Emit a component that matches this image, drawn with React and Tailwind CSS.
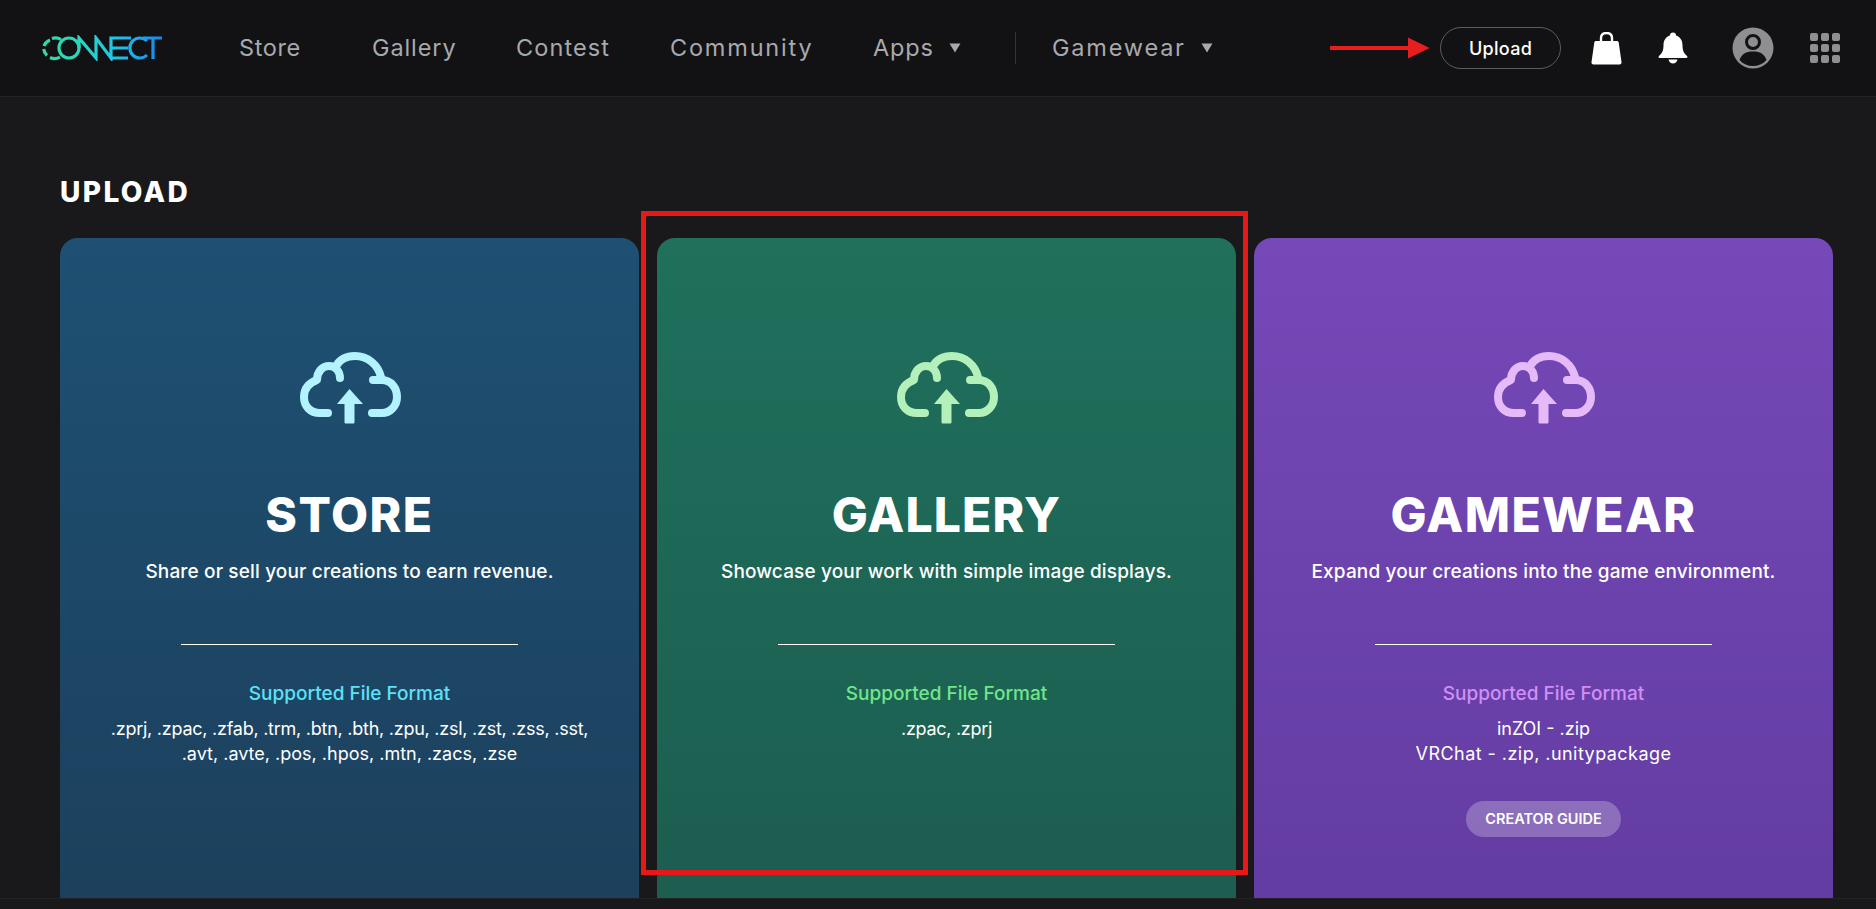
const font = { fontFamily: 'Inter, "Noto Sans", sans-serif' };

function Logo() {
  return (
    <svg width="122" height="26" viewBox="41 35 122 26" fill="none" className="shrink-0">
      <defs>
        <linearGradient id="lg" gradientUnits="userSpaceOnUse" x1="42" y1="0" x2="162" y2="0">
          <stop offset="0" stopColor="#2fdca0" />
          <stop offset="0.35" stopColor="#2bd3c4" />
          <stop offset="0.6" stopColor="#22c6e6" />
          <stop offset="1" stopColor="#1688f0" />
        </linearGradient>
      </defs>
      <g stroke="url(#lg)" strokeWidth="3.2" strokeLinecap="butt">
        <path d="M61 39.5 A10.5 10.5 0 0 0 52 38.5" />
        <path d="M50 40 A10.5 10.5 0 0 0 44 46" />
        <path d="M43.7 49 A10.5 10.5 0 0 0 47 55.5" />
        <path d="M50 57.5 A10.5 10.5 0 0 0 60 57" />
        <circle cx="69" cy="48" r="10" />
        <path d="M79 48 V38 L96 58 V38 L111 58 V38 H131 M111 48 H128 M111 58 H128" />
        <path d="M147 41 A10 10 0 1 0 147 55" />
        <path d="M143 38 H162 M153 38 V59" />
      </g>
    </svg>
  );
}

function NavLink({ children, caret, className = '' }) {
  return (
    <span className={`flex items-center text-[23.5px] leading-none text-[#a9a9ad] ${className}`}>
      {children}
      {caret && (
        <svg width="12" height="10" viewBox="0 0 12 10" className="ml-[15px]">
          <path d="M0.5 0.5 H11.5 L6 9.5 Z" fill="#a9a9ad" />
        </svg>
      )}
    </span>
  );
}

function CloudIcon({ color }) {
  return (
    <svg width="104" height="80" viewBox="38 20 104 80" fill="none">
      <g stroke={color} strokeWidth="8" strokeLinecap="round" strokeLinejoin="round">
        <path d="M68 83 H60 C50 83 44 76 44 67 C44 59 49 53 57 50 C57 41 63 36 69 36 C76 36 80 42 80 48" />
        <path d="M76 36 C80 29 87 26 95 26 C108 26 118 35 121 47" />
        <path d="M113 50 H122 C131 50 137 58 137 67 C137 76 130 83 122 83 H112" />
      </g>
      <path d="M89.5 59 L103 74 H94.5 V92 C94.5 93 94 93.5 93 93.5 H86 C85 93.5 84.5 93 84.5 92 V74 H77 Z" fill={color} />
    </svg>
  );
}

function Card({ title, subtitle, bg, iconColor, accent, lines, tracking, button }) {
  return (
    <div className={`flex h-[680px] flex-col items-center rounded-[18px] pt-[112px] text-center text-white ${bg}`}>
      <CloudIcon color={iconColor} />
      <h2 className={`mt-[56px] text-[48px] font-extrabold leading-[58px] ${tracking}`}>{title}</h2>
      <p className="mt-[14px] text-[19px] font-medium leading-[28px] tracking-[0.15px]">{subtitle}</p>
      <div className="mt-[58px] h-px w-[337px] bg-white" />
      <p className={`mt-[36px] text-[19px] font-medium leading-[26px] ${accent}`}>Supported File Format</p>
      <div className="mt-[9px] text-[18px] leading-[25px]">
        {lines.map(([text, cls]) => (
          <div key={text} className={cls}>{text}</div>
        ))}
      </div>
      {button && (
        <span className="mt-[35px] flex h-[36px] w-[155px] items-center justify-center rounded-full bg-white/25 text-[14.5px] font-semibold">
          CREATOR GUIDE
        </span>
      )}
    </div>
  );
}

export default function App() {
  return (
    <div style={font} className="relative h-[909px] w-full overflow-hidden bg-[#19191b]">
      <header className="flex h-[97px] items-center border-b border-[#232325] bg-[#121214] pl-[41px] pr-[36px]">
        <Logo />
        <nav className="ml-[76px] flex items-center">
          <NavLink className="w-[133px] tracking-[0.6px]">Store</NavLink>
          <NavLink className="w-[144px] tracking-[0.9px]">Gallery</NavLink>
          <NavLink className="w-[154px] tracking-[1.1px]">Contest</NavLink>
          <NavLink className="w-[203px] tracking-[1.8px]">Community</NavLink>
          <NavLink caret className="w-[142px] tracking-[0.8px]">Apps</NavLink>
          <span className="mr-[36px] h-[32px] w-px bg-[#333336]" />
          <NavLink caret className="tracking-[1.8px]">Gamewear</NavLink>
        </nav>
        <div className="ml-auto flex items-center">
          <span className="mr-[10px] flex items-center">
            <svg width="100" height="22" viewBox="0 0 100 22">
              <path d="M0 9 H78 V0.5 L99.5 11 L78 21.5 V13 H0 Z" fill="#e61e1e" />
            </svg>
          </span>
          <span className="flex h-[42px] w-[121px] items-center justify-center rounded-full border border-[#5c5c5f] text-[18px] font-medium tracking-[0.3px] text-white">
            Upload
          </span>
          <svg className="ml-[30px]" width="31" height="33" viewBox="0 0 31 33" fill="white">
            <path d="M10 9 V6 C10 2.5 12 1 15.5 1 C19 1 21 2.5 21 6 V9" fill="none" stroke="white" strokeWidth="2.4" />
            <path d="M5 9 H26 C27 9 27.6 9.6 27.7 10.5 L30.5 30 C30.7 31.5 30 32.5 28.5 32.5 H2.5 C1 32.5 0.3 31.5 0.5 30 L3.3 10.5 C3.4 9.6 4 9 5 9 Z" />
          </svg>
          <svg className="ml-[36px]" width="30" height="32" viewBox="0 0 30 32" fill="white">
            <circle cx="15" cy="3.5" r="3" />
            <path d="M15 3 C21 3 24.5 7.5 24.5 13 C24.5 18 25.5 21 29 24 C30 25 29.5 26 28 26 H2 C0.5 26 0 25 1 24 C4.5 21 5.5 18 5.5 13 C5.5 7.5 9 3 15 3 Z" />
            <path d="M10.5 27.5 H19.5 C19 30 17 31.5 15 31.5 C13 31.5 11 30 10.5 27.5 Z" />
          </svg>
          <svg className="ml-[44px]" width="42" height="42" viewBox="0 0 42 42">
            <circle cx="21" cy="21" r="20.5" fill="#8e8e93" />
            <circle cx="21" cy="15" r="6.5" fill="#8e8e93" stroke="#121214" strokeWidth="3" />
            <path d="M7.5 33 C9.5 27 14 24.5 21 24.5 C28 24.5 32.5 27 34.5 33 C31 37 26 39 21 39 C16 39 11 37 7.5 33 Z" fill="#121214" />
          </svg>
          <div className="ml-[36px] grid grid-cols-3 gap-[3px]">
            {Array.from({ length: 9 }).map((_, i) => (
              <span key={i} className="h-[8px] w-[8px] rounded-[2px] bg-[#8e8e93]" />
            ))}
          </div>
        </div>
      </header>

      <main className="h-[801px] overflow-hidden pl-[60px]">
        <h1 className="mt-[78px] text-[28px] font-extrabold leading-[34px] tracking-[2.4px] text-white">UPLOAD</h1>
        <div className="mt-[29px] grid w-[1773px] grid-cols-3 gap-[18px]">
          <Card
            title="STORE"
            subtitle="Share or sell your creations to earn revenue."
            bg="bg-gradient-to-b from-[#1e5073] to-[#1c405c]"
            iconColor="#b2f3ff"
            accent="text-[#5ce1f6]"
            tracking="tracking-[1.5px]"
            lines={[
              ['.zprj, .zpac, .zfab, .trm, .btn, .bth, .zpu, .zsl, .zst, .zss, .sst,', 'tracking-[-0.25px]'],
              ['.avt, .avte, .pos, .hpos, .mtn, .zacs, .zse', ''],
            ]}
          />
          <Card
            title="GALLERY"
            subtitle="Showcase your work with simple image displays."
            bg="bg-gradient-to-b from-[#1f705c] to-[#1c5d50]"
            iconColor="#b4f0ba"
            accent="text-[#71e58a]"
            tracking="tracking-[1.2px]"
            lines={[['.zpac, .zprj', 'tracking-[-0.3px]']]}
          />
          <Card
            title="GAMEWEAR"
            subtitle="Expand your creations into the game environment."
            bg="bg-gradient-to-b from-[#7549b8] to-[#633ca2]"
            iconColor="#e6b9f8"
            accent="text-[#d08ff6]"
            tracking="tracking-[1.4px]"
            lines={[['inZOI - .zip', ''], ['VRChat - .zip, .unitypackage', 'tracking-[0.45px]']]}
            button
          />
        </div>
      </main>
      <div className="h-[11px] border-t border-[#232325] bg-[#19191b]" />

      <div className="pointer-events-none absolute left-[641px] top-[211px] h-[664px] w-[607px] border-[5px] border-[#e61919]" />
    </div>
  );
}
